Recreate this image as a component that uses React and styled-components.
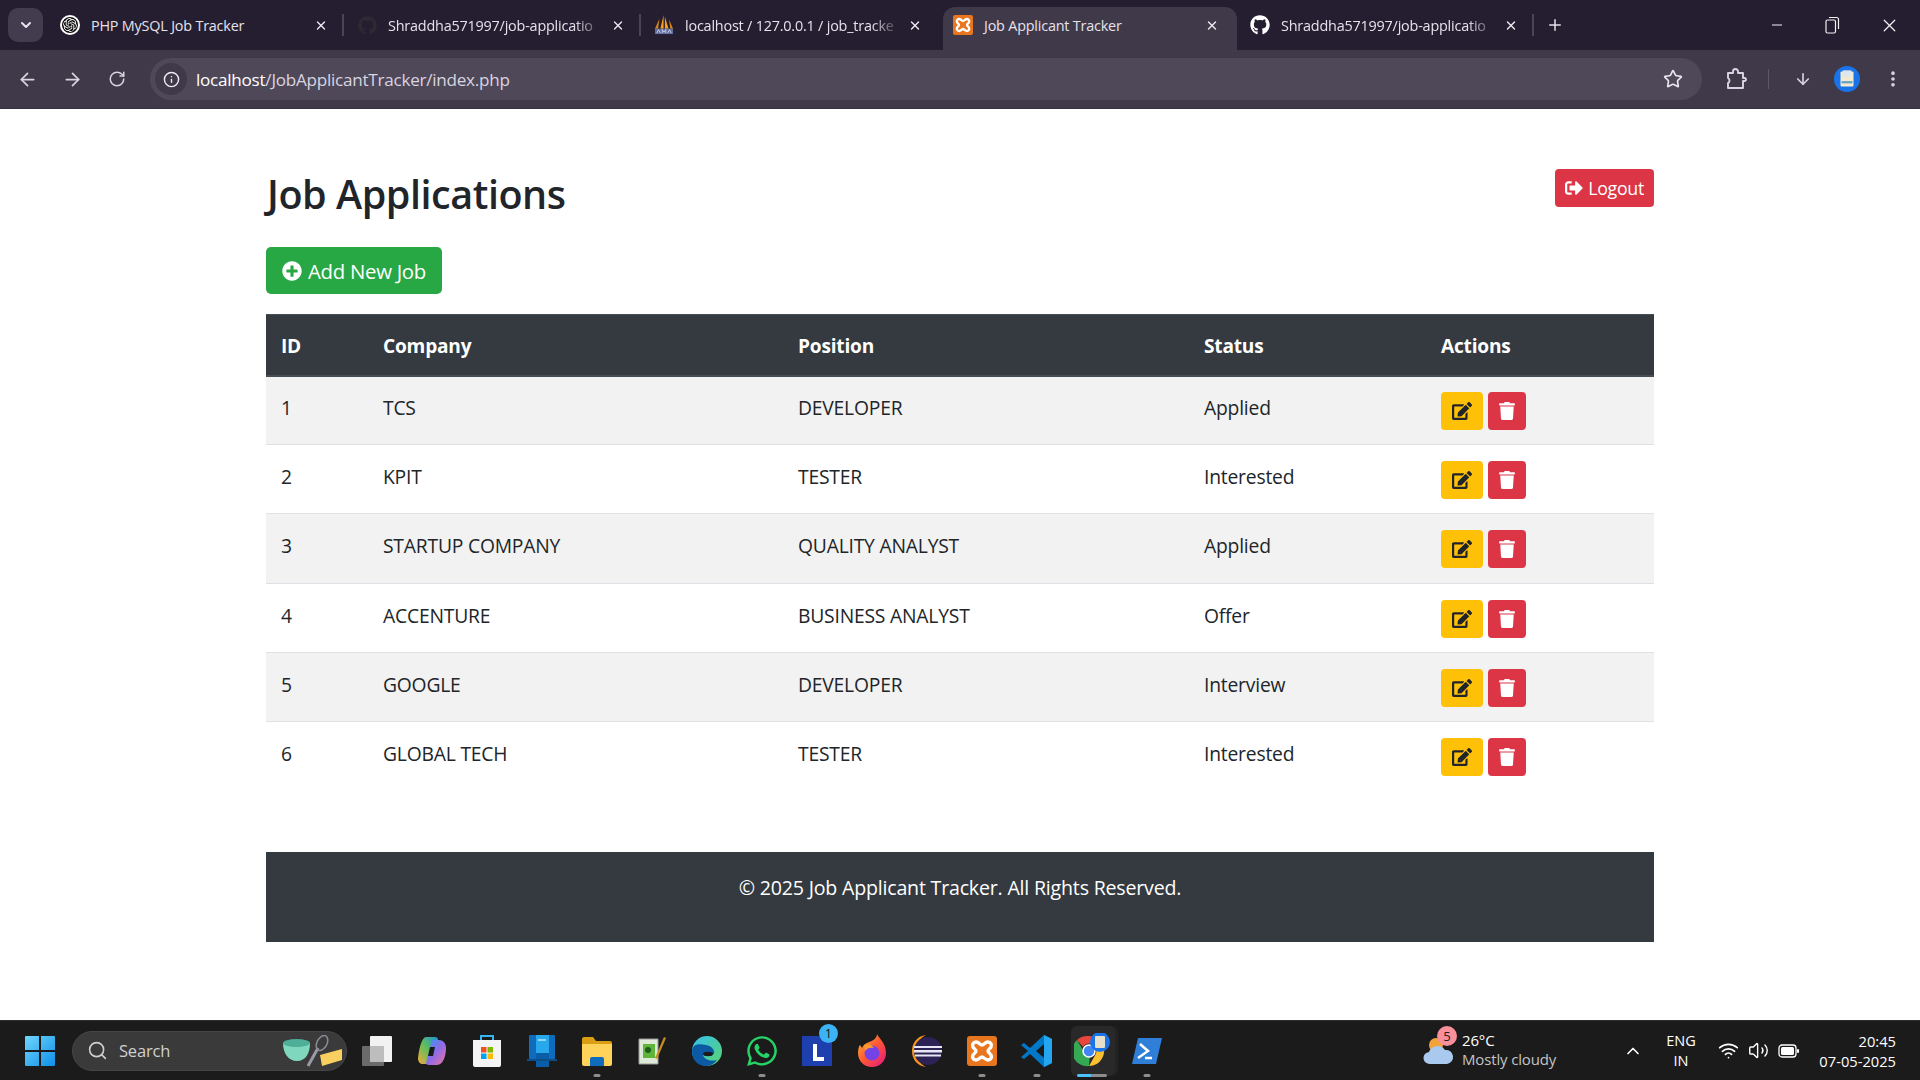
import React from "react";
import styled, { createGlobalStyle } from "styled-components";
import { FaEdit, FaTrash, FaSignOutAlt, FaPlusCircle, FaGithub, FaWhatsapp } from "react-icons/fa";
import { SiOpenai } from "react-icons/si";
import { ArrowLeft, ArrowRight, RotateCw, Info, Star, ArrowDown, EllipsisVertical, Minus, X, Plus, Search as SearchGlyph, ChevronUp, ChevronDown, Wifi, Volume2 } from "lucide-react";

const Global = createGlobalStyle`
  html, body { margin: 0; padding: 0; height: 100%; background: #fff; }
  body { font-family: "Open Sans", "Noto Sans", sans-serif; color: #212529; overflow: hidden; }
  #root { height: 100%; }
  * { box-sizing: border-box; }
`;

const Screen = styled.div`
  width: 1920px; height: 1080px; display: flex; flex-direction: column; background: #fff;
`;
const TabStrip = styled.div`
  height: 50px; background: #251d30; display: flex; align-items: flex-end; padding-left: 8px; flex: none;
`;
const TabSearch = styled.div`
  width: 35px; height: 34px; margin: 0 4px 8px 0; border-radius: 10px; background: #423c4e; color: #e8e4ee;
  display: flex; align-items: center; justify-content: center;
`;
const TabItem = styled.div`
  width: ${p => (p.$active ? "294px" : "297px")};
  margin-left: ${p => (p.$active ? "5px" : "0")};
  height: ${p => (p.$active ? "43px" : "50px")};
  padding-left: ${p => (p.$active ? "10px" : "13px")};
  padding-right: ${p => (p.$active ? "18px" : "16px")};
  padding-bottom: ${p => (p.$active ? "7px" : "0")};
  background: ${p => (p.$active ? "#3f3949" : "transparent")};
  border-radius: 12px 12px 0 0;
  display: flex; align-items: center; gap: 11px; color: #e4e0ea;
  position: relative;
  &::after {
    content: ""; position: absolute; right: 0; top: 14px; width: 2px; height: 22px;
    background: ${p => (p.$sep ? "#4a4455" : "transparent")};
  }
`;
const Favicon = styled.span`
  width: 20px; height: 20px; flex: none; display: flex; align-items: center; justify-content: center;
`;
const TabTitle = styled.span`
  flex: 1; min-width: 0; white-space: nowrap; font-size: 14.4px; letter-spacing: -0.2px; color: #e6e2ec;
  ${p => p.$fade && "-webkit-mask-image: linear-gradient(90deg,#000 88%,rgba(0,0,0,.15) 100%); mask-image: linear-gradient(90deg,#000 88%,rgba(0,0,0,.15) 100%);"}
`;
const TabClose = styled.span`
  width: 14px; height: 14px; flex: none; display: flex; align-items: center; justify-content: center; color: #ece9f0;
`;
const NewTab = styled.div`
  width: 20px; height: 50px; margin-left: 11px; display: flex; align-items: center; justify-content: center; color: #e4e0ea;
`;
const WinControls = styled.div`
  margin-left: auto; height: 50px; display: flex; align-items: center; padding-right: 2px; color: #f2eff5;
`;
const WinBtn = styled.div`
  width: 56.5px; display: flex; align-items: center; justify-content: center;
`;
const Toolbar = styled.div`
  height: 59px; flex: none; background: #3f3949; border-bottom: 1px solid #37323f; display: flex; align-items: center; padding: 0 0 0 9px; color: #d9d4e0;
`;
const NavBtn = styled.div`
  width: 36px; height: 36px; margin-right: ${p => p.$mr || 9}px; display: flex; align-items: center; justify-content: center;
`;
const Omnibox = styled.div`
  width: 1552px; height: 42px; margin-left: 14px; border-radius: 21px; background: #4f4858; display: flex; align-items: center; padding: 0 19px 0 5px;
`;
const InfoChip = styled.div`
  width: 32px; height: 32px; border-radius: 50%; background: #3f3949; display: flex; align-items: center; justify-content: center; color: #efebf3; margin-right: 9px;
`;
const Url = styled.div`
  flex: 1; font-size: 17.1px; letter-spacing: -0.25px; color: #d9d4e0; white-space: nowrap;
  b { font-weight: 400; color: #fff; }
`;
const ToolIcons = styled.div`
  display: flex; align-items: center; flex: 1; padding-left: 16px;
`;
const ToolSep = styled.div`
  width: 1px; height: 20px; background: #5c5666; margin: 0 16px 0 14px;
`;
const ToolIcon = styled.div`
  width: ${p => p.$w || 36}px; height: 36px; display: flex; align-items: center; justify-content: center; margin-right: ${p => p.$mr || 0}px;
`;
const Page = styled.main`
  flex: 1; min-height: 0; background: #fff; display: flex; flex-direction: column; align-items: center;
`;
const Container = styled.div`
  width: 1388px; padding-top: 60px;
`;
const HeaderRow = styled.div`
  display: flex; justify-content: space-between; align-items: flex-start; height: 78px;
`;
const Title = styled.h1`
  margin: 0 0 0 1px; font-size: 39.5px; line-height: 50px; font-weight: 600; letter-spacing: -0.45px; color: #212529;
`;
const Button = styled.a`
  display: inline-flex; align-items: center; gap: ${p => (p.$large ? 6 : 5)}px; color: #fff; background: ${p => p.$bg};
  border-radius: ${p => (p.$large ? "5px" : "4px")};
  height: ${p => (p.$large ? "47px" : "38px")};
  padding: ${p => (p.$large ? "0 16px" : "0 10px")};
  font-size: ${p => (p.$large ? "20.4px" : "17.8px")}; letter-spacing: -0.3px;
`;
const Table = styled.table`
  width: 1388px; margin-top: 20px; border-collapse: collapse; table-layout: fixed; font-size: 19.3px; letter-spacing: -0.2px;
`;
const Th = styled.th`
  background: #343a40; color: #fff; height: 61px; padding: 2px 15px 0; text-align: left; font-weight: 700; font-size: 19.1px;
  border-top: 1px solid #454d55; border-bottom: 2px solid #454d55;
`;
const Tr = styled.tr`
  height: 69.2px; background: ${p => (p.$odd ? "#f2f2f2" : "#fff")};
`;
const Td = styled.td`
  padding: 0 15px 5px; border-top: 1px solid #dee2e6; color: #212529;
`;
const ActionCell = styled.td`
  padding: 2px 15px 0; border-top: 1px solid #dee2e6;
`;
const Actions = styled.div` display: flex; gap: 5px; `;
const IconBtn = styled.button`
  border: 0; padding: 0; height: 38px; width: ${p => p.$w}px; background: ${p => p.$bg}; color: ${p => p.$fg}; border-radius: 4px;
  display: flex; align-items: center; justify-content: center;
`;
const Footer = styled.footer`
  margin-top: 61px; height: 90px; background: #343a40; color: #fff; text-align: center; font-size: 19.6px; letter-spacing: -0.2px; padding-top: 23px; line-height: 26px;
`;
const Taskbar = styled.div`
  height: 60px; flex: none; background: #1b1b1b; border-top: 1px solid #2e2e2e; display: flex; align-items: center; color: #fff;
`;
const StartBtn = styled.div` width: 30px; height: 30px; margin-left: 25px; flex: none; display: flex; `;
const SearchPill = styled.div`
  width: 275px; height: 40px; margin-left: 17px; flex: none; border-radius: 20px; background: #3a3a3a; border: 1px solid #464646; display: flex; align-items: center; padding-left: 14px; color: #d0d0d0; font-size: 16.5px; letter-spacing: -0.2px;
`;
const SearchLabel = styled.span` margin-left: 11px; flex: 1; `;
const Doodle = styled.span` display: flex; margin-right: 2px; `;
const AppRow = styled.div` display: flex; margin-left: 2px; flex: none; `;
const AppSlot = styled.div`
  width: 55px; height: 58px; display: flex; align-items: center; justify-content: center; position: relative;
  ${p => p.$active && `
    &::before { content:""; position:absolute; left:7px; right:4px; top:4px; bottom:4px; background:#292929; border-radius:6px; box-shadow: 3px 0 0 #232323; }
  `}
  &::after {
    content: ""; position: absolute; bottom: 3px; left: 50%; transform: translateX(-50%);
    height: 3px; border-radius: 2px;
    width: ${p => (p.$active ? "30px" : p.$dot ? "7px" : "0")};
    background: ${p => (p.$active ? "linear-gradient(90deg,#4cc2ff 45%,#8d8d8d 45%)" : "#8d8d8d")};
  }
  svg { position: relative; z-index: 1; }
`;
const CountBadge = styled.span`
  position: absolute; top: 2px; right: 6px; width: 19px; height: 19px; border-radius: 50%; background: #3bb3f4; color: #111; font-size: 12px; display: flex; align-items: center; justify-content: center; z-index: 2;
`;
const Tray = styled.div` margin-left: auto; display: flex; align-items: center; height: 100%; `;
const Weather = styled.div` display: flex; align-items: center; position: relative; width: 190px; `;
const WeatherBadge = styled.span`
  position: absolute; left: 14px; top: -5px; width: 20px; height: 20px; border-radius: 50%; background: #f88f9b; color: #222; font-size: 13px; display: flex; align-items: center; justify-content: center;
`;
const WeatherText = styled.div`
  margin-left: 8px; font-size: 15px; line-height: 20px; letter-spacing: -0.15px; transform: translateY(-1px);
  small { display: block; font-size: 15px; line-height: 19px; color: #c4c4c4; }
`;
const Caret = styled.div` width: 40px; display: flex; justify-content: center; `;
const Lang = styled.div` width: 56px; text-align: center; font-size: 14.5px; line-height: 20px; `;
const SysIcons = styled.div` display: flex; align-items: center; gap: 9px; margin-left: 9px; width: 95px; `;
const Clock = styled.div` width: 80px; margin-left: 3px; text-align: right; font-size: 14.7px; line-height: 20px; margin-right: 24px; white-space: nowrap; `;

const ExtIcon = () => (
  <svg width="22" height="24" viewBox="0 0 22 24" fill="none" stroke="currentColor" strokeWidth="1.900" strokeLinejoin="round">
    <path d="M3 6h5V4.500a2.500 2.500 0 0 1 5 0V6h5v5h1.500a1.500 1.500 0 0 1 0 3H18v7H3v-5c2-1 2-4 0-5z" />
  </svg>
);
const RestoreIcon = () => (
  <svg width="16" height="18" viewBox="0 0 16 18" fill="none" stroke="currentColor" strokeWidth="1.200">
    <rect x="1" y="4" width="9.500" height="13" rx="1.500"/><path d="M4 1.500h7.500a2 2 0 0 1 2 2v9.500"/>
  </svg>
);
const PmaIcon = () => (
  <svg width="22" height="22" viewBox="0 0 22 22">
    <path d="M10.500 0 7 15h3.500zM12 2l4 13h-4z" fill="#f7a01e"/>
    <path d="M6 4 1 15h3.500zM16.500 5 21 15h-3z" fill="#d98616"/>
    <rect x="1" y="15" width="20" height="6" fill="#5f6a9c"/>
    <path d="M3 20l2-4 2 4M9 20v-4l2 3 2-3v4M15 20l2-4 2 4" fill="none" stroke="#d8dcf0" strokeWidth=".9"/>
  </svg>
);
const XamppIcon = ({ s = 20 }) => (
  <svg width={s} height={s} viewBox="0 0 30 30">
    <rect width="30" height="30" rx="3" fill="#e8761f"/>
    <path d="M9 6c3 0 4 3 6 3s3-3 6-3c3 0 4 3 3 5-.7 1.400-3 2.500-3 4s2.300 2.600 3 4c1 2 0 5-3 5-3 0-4-3-6-3s-3 3-6 3c-3 0-4-3-3-5 .7-1.400 3-2.500 3-4s-2.300-2.600-3-4C5 9 6 6 9 6z" fill="none" stroke="#fff" strokeWidth="3.400"/>
  </svg>
);
const Avatar = ({ s = 26 }) => (
  <svg width={s} height={s} viewBox="0 0 24 24">
    <circle cx="12" cy="12" r="12" fill="#1a73e8"/>
    <rect x="6" y="5" width="12" height="14" rx="1" fill="#f3ead0"/>
    <rect x="8" y="4" width="8" height="6" fill="#dfe7ee"/>
    <rect x="7" y="14" width="10" height="2" fill="#5aa0c8"/>
  </svg>
);
const WinLogo = () => (
  <svg width="30" height="30" viewBox="0 0 30 30">
    <defs><linearGradient id="wl" x1="0" y1="0" x2="1" y2="1"><stop offset="0" stopColor="#6fd6fb"/><stop offset="1" stopColor="#0f8fe8"/></linearGradient></defs>
    <path d="M0 1a1 1 0 0 1 1-1h13v14H0zM16 0h13a1 1 0 0 1 1 1v13H16zM0 16h14v14H1a1 1 0 0 1-1-1zM16 16h14v13a1 1 0 0 1-1 1H16z" fill="url(#wl)"/>
  </svg>
);
const Bowl = () => (
  <svg width="62" height="32" viewBox="0 0 62 32">
    <path d="M1 8h27c0 10-4 18-13 18S1 18 1 8z" fill="#7fd8bd"/><ellipse cx="14.500" cy="8" rx="13.500" ry="4" fill="#4fae98"/>
    <path d="M26 31 36 13" stroke="#9a9aa6" strokeWidth="3"/><ellipse cx="40" cy="8" rx="5" ry="8" transform="rotate(28 40 8)" fill="none" stroke="#8c8c98" strokeWidth="1.500"/>
    <path d="M38 20 60 14v11l-20 6z" fill="#f9cf5f"/>
  </svg>
);
const TaskView = () => (
  <svg width="30" height="30" viewBox="0 0 30 30"><rect x="8" width="22" height="26" fill="#f2f2f2" rx="1"/><rect y="10" width="22" height="20" rx="1" fill="#6b6b6b"/><rect x="8" y="10" width="14" height="16" fill="#bdbdbd"/></svg>
);
const Copilot = () => (
  <svg width="30" height="30" viewBox="0 0 30 30">
    <defs><linearGradient id="cp" x1="0" y1="0" x2="1" y2="1"><stop offset="0" stopColor="#2d9cf0"/><stop offset=".5" stopColor="#8f6be8"/><stop offset="1" stopColor="#f0739a"/></linearGradient><linearGradient id="cp2" x1="0" y1="1" x2="1" y2="0"><stop offset="0" stopColor="#f2a93b"/><stop offset=".5" stopColor="#5fbf5a"/><stop offset="1" stopColor="#1f8fe0"/></linearGradient></defs>
    <path d="M9 1h9c2 0 3 1 3 3l-5 20c-.500 2-2 4-5 4H6C3 28 1 26 1 22 2 12 5 1 9 1z" fill="url(#cp2)"/>
    <path d="M14 4h8c4 0 7 3 7 8 0 8-3 17-9 17h-8c-2 0-3-1-3-2l6-23z" fill="url(#cp)"/>
    <path d="M13 11h5l-2 9h-5z" fill="#1b1b1b"/>
  </svg>
);
const Store = () => (
  <svg width="30" height="34" viewBox="0 0 30 34">
    <path d="M9 6V2h12v4" fill="none" stroke="#35b6f2" strokeWidth="2"/>
    <path d="M1 6h28v25a2 2 0 0 1-2 2H3a2 2 0 0 1-2-2z" fill="#f4f4f4"/>
    <rect x="9" y="13" width="5.500" height="5.500" fill="#f25022"/><rect x="15.500" y="13" width="5.500" height="5.500" fill="#7fba00"/><rect x="9" y="19.500" width="5.500" height="5.500" fill="#00a4ef"/><rect x="15.500" y="19.500" width="5.500" height="5.500" fill="#ffb900"/>
  </svg>
);
const BlueApp = () => (
  <svg width="30" height="32" viewBox="0 0 30 32">
    <rect x="2" width="26" height="24" rx="1" fill="#0f6cbd"/><rect x="9" width="13" height="32" fill="#28a8ea"/><rect x="9" y="18" width="13" height="14" fill="#0a5ea8"/><rect y="24" width="30" height="2" fill="#0b4f8a"/><rect x="11" y="4" width="8" height="2" fill="#8fd8f8"/>
  </svg>
);
const Explorer = () => (
  <svg width="30" height="30" viewBox="0 0 30 30">
    <path d="M0 3a2 2 0 0 1 2-2h9l3 4h14a2 2 0 0 1 2 2v3H0z" fill="#d99e12"/><path d="M0 8h30v20a2 2 0 0 1-2 2H2a2 2 0 0 1-2-2z" fill="#ffd25a"/><path d="M8 23a2 2 0 0 1 2-2h10a2 2 0 0 1 2 2v7H8z" fill="#0f6cbd"/>
  </svg>
);
const NotepadPP = () => (
  <svg width="28" height="30" viewBox="0 0 28 30">
    <path d="M1 3h19v25H1z" fill="#dfe9d8" stroke="#999"/><path d="M5 8h12v14H5z" fill="#5eb53a"/><circle cx="10" cy="14" r="3" fill="#1e5c1e"/><path d="M17 22 26 1l2 1-9 21z" fill="#c88d1c"/>
  </svg>
);
const Edge = () => (
  <svg width="30" height="30" viewBox="0 0 30 30">
    <defs><linearGradient id="eg" x1="0" y1="0" x2="1" y2="1"><stop offset="0" stopColor="#35c1f1"/><stop offset="1" stopColor="#5ad46c"/></linearGradient></defs>
    <circle cx="15" cy="15" r="15" fill="url(#eg)"/>
    <path d="M0 15C1 7 8 8 14 9c6 1 9 5 8 9H11c0 4 5 8 14 6-3 4-7 6-11 6C6 30 0 24 0 15z" fill="#0c59a4"/>
    <ellipse cx="16" cy="18" rx="5" ry="2.200" fill="#1b1b1b"/>
  </svg>
);
const LApp = () => (
  <svg width="30" height="30" viewBox="0 0 30 30"><rect width="30" height="30" fill="#1e3fae"/><path d="M11 8h4v13h7v4H11z" fill="#fff"/></svg>
);
const Firefox = () => (
  <svg width="30" height="34" viewBox="0 0 30 34">
    <defs><linearGradient id="ff" x1="0" y1="0" x2="1" y2="1"><stop offset="0" stopColor="#ffbd2e"/><stop offset=".5" stopColor="#ff5634"/><stop offset="1" stopColor="#e31587"/></linearGradient></defs>
    <path d="M20 0c1 4 9 8 9 19 0 8-6 14-14 14S1 27 1 19c0-4 1-7 2-8l2 3c1-3 4-5 7-6 4-1 8-4 8-8z" fill="url(#ff)"/>
    <circle cx="15" cy="19" r="7.500" fill="#7542e5"/><path d="M7 11c4-2 8 0 10 3-3-1-7 0-9 3z" fill="#ff9a2e"/>
  </svg>
);
const Eclipse = () => (
  <svg width="30" height="32" viewBox="0 0 30 32">
    <path d="M14 0C5 1 0 8 0 16s5 15 14 16C8 29 4 23 4 16S8 3 14 0z" fill="#f7941e"/>
    <circle cx="16" cy="16" r="14" fill="#2c2255"/><rect x="2" y="11" width="28" height="2" fill="#e8e6f2"/><rect x="2" y="15" width="28" height="2.500" fill="#e8e6f2"/><rect x="3" y="19.500" width="26" height="2" fill="#e8e6f2"/>
  </svg>
);
const VSCode = () => (
  <svg width="31" height="32" viewBox="0 0 31 32">
    <path d="M23 0 31 4v24l-8 4-14-13-6 5-3-2 7-6-7-6 3-2 6 5z" fill="#0078c8"/><path d="M23 0 31 4v24l-8 4V22l-7-6 7-7z" fill="#22a7f0"/><path d="M23 9v14l-8-7z" fill="#1b1b1b"/>
  </svg>
);
const Chrome = () => (
  <svg width="36" height="36" viewBox="0 0 36 36">
    <path d="M15 3a15 15 0 0 1 13 7.500H15a7 7 0 0 0-6 3.500L3 7a15 15 0 0 1 12-4z" fill="#e8453c"/>
    <path d="M28 10.500A15 15 0 0 1 15 33l6.500-11.500A7 7 0 0 0 21 14z" fill="#fbc02d"/>
    <path d="M15 33A15 15 0 0 1 3 7l6 10a7 7 0 0 0 7 5z" fill="#34a853"/>
    <circle cx="15" cy="18" r="6" fill="#4285f4" stroke="#fff" strokeWidth="1.500"/>
    <g transform="translate(16 0)"><circle cx="10" cy="9" r="10" fill="#1a73e8"/><rect x="5" y="3" width="10" height="12" rx="1" fill="#e6dfca"/></g>
  </svg>
);
const PowerShell = () => (
  <svg width="30" height="26" viewBox="0 0 30 26">
    <path d="M6 0h24l-6 26H0z" fill="#2f7fd8"/><path d="M8 6l8 7-10 7" fill="none" stroke="#fff" strokeWidth="2.500"/><path d="M13 20h7" stroke="#fff" strokeWidth="2.500"/>
  </svg>
);
const Cloud = () => (
  <svg width="31" height="30" viewBox="0 0 31 30">
    <circle cx="13" cy="9" r="7" fill="#f2a33a"/>
    <path d="M7 28a6 6 0 0 1-1-12 9 9 0 0 1 16-2 7 7 0 0 1 2 14z" fill="#a9c9ee"/>
  </svg>
);
const Battery = () => (
  <svg width="21" height="14" viewBox="0 0 21 14"><rect x="1" y="1" width="17" height="12" rx="3" fill="none" stroke="#fff" strokeWidth="1.300"/><rect x="3" y="3" width="13" height="8" rx="1.500" fill="#fff"/><rect x="19" y="5" width="2" height="4" rx="1" fill="#fff"/></svg>
);

const tabs = [
  { title: "PHP MySQL Job Tracker", icon: <SiOpenai size={18} color="#fff" style={{ background: "#0d0d0d", borderRadius: "50%", outline: "2px solid #fff", outlineOffset: -1, padding: 2 }} />, sep: true },
  { title: "Shraddha571997/job-applicatio", icon: <FaGithub size={19} color="#2d2a33" />, sep: true, fade: true },
  { title: "localhost / 127.0.0.1 / job_tracke", icon: <PmaIcon />, fade: true },
  { title: "Job Applicant Tracker", icon: <XamppIcon />, active: true },
  { title: "Shraddha571997/job-applicatio", icon: <FaGithub size={20} color="#fff" />, sep: true, fade: true },
];
const jobs = [
  [1, "TCS", "DEVELOPER", "Applied"],
  [2, "KPIT", "TESTER", "Interested"],
  [3, "STARTUP COMPANY", "QUALITY ANALYST", "Applied"],
  [4, "ACCENTURE", "BUSINESS ANALYST", "Offer"],
  [5, "GOOGLE", "DEVELOPER", "Interview"],
  [6, "GLOBAL TECH", "TESTER", "Interested"],
];
const apps = [
  { el: <TaskView /> }, { el: <Copilot /> }, { el: <Store /> }, { el: <BlueApp /> },
  { el: <Explorer />, dot: true }, { el: <NotepadPP /> }, { el: <Edge /> },
  { el: <FaWhatsapp size={34} color="#25d366" />, dot: true },
  { el: <LApp />, badge: "1" }, { el: <Firefox /> }, { el: <Eclipse /> },
  { el: <XamppIcon s={30} />, dot: true }, { el: <VSCode />, dot: true },
  { el: <Chrome />, active: true }, { el: <PowerShell />, dot: true },
];

export default function App() {
  return (
    <Screen>
      <Global />
      <TabStrip>
        <TabSearch><ChevronDown size={16} strokeWidth={3} /></TabSearch>
        {tabs.map((t, i) => (
          <TabItem key={i} $active={t.active} $sep={t.sep}>
            <Favicon>{t.icon}</Favicon>
            <TabTitle $fade={t.fade}>{t.title}</TabTitle>
            <TabClose><X size={15} strokeWidth={2.4} /></TabClose>
          </TabItem>
        ))}
        <NewTab><Plus size={18} strokeWidth={2} /></NewTab>
        <WinControls>
          <WinBtn><Minus size={16} strokeWidth={1.5} /></WinBtn>
          <WinBtn><RestoreIcon /></WinBtn>
          <WinBtn><X size={21} strokeWidth={1.4} /></WinBtn>
        </WinControls>
      </TabStrip>
      <Toolbar>
        <NavBtn><ArrowLeft size={21} strokeWidth={2} /></NavBtn>
        <NavBtn><ArrowRight size={21} strokeWidth={2} /></NavBtn>
        <NavBtn $mr={1}><RotateCw size={18} strokeWidth={2} /></NavBtn>
        <Omnibox>
          <InfoChip><Info size={17} strokeWidth={2} /></InfoChip>
          <Url><b>localhost</b>/JobApplicantTracker/index.php</Url>
          <Star size={20} strokeWidth={2} color="#e8e4ee" />
        </Omnibox>
        <ToolIcons>
          <ToolIcon><ExtIcon /></ToolIcon>
          <ToolSep />
          <ToolIcon><ArrowDown size={18} strokeWidth={2.2} /></ToolIcon>
          <ToolIcon $w={52} $mr={4}><Avatar /></ToolIcon>
          <ToolIcon $w={32}><EllipsisVertical size={20} strokeWidth={2.4} /></ToolIcon>
        </ToolIcons>
      </Toolbar>
      <Page>
        <Container>
          <HeaderRow>
            <Title>Job Applications</Title>
            <Button $bg="#dc3545"><FaSignOutAlt size={18} />Logout</Button>
          </HeaderRow>
          <Button $large $bg="#28a745"><FaPlusCircle size={20} />Add New Job</Button>
          <Table>
            <colgroup>
              <col style={{ width: 102 }} /><col style={{ width: 415 }} /><col style={{ width: 406 }} /><col style={{ width: 237 }} /><col />
            </colgroup>
            <thead>
              <tr>{["ID", "Company", "Position", "Status", "Actions"].map(h => <Th key={h}>{h}</Th>)}</tr>
            </thead>
            <tbody>
              {jobs.map((j, i) => (
                <Tr key={j[0]} $odd={i % 2 === 0}>
                  {j.map((c, k) => <Td key={k}>{c}</Td>)}
                  <ActionCell>
                    <Actions>
                      <IconBtn $w={42} $bg="#ffc107" $fg="#212529"><FaEdit size={20} /></IconBtn>
                      <IconBtn $w={38} $bg="#dc3545" $fg="#fff"><FaTrash size={18} /></IconBtn>
                    </Actions>
                  </ActionCell>
                </Tr>
              ))}
            </tbody>
          </Table>
          <Footer>© 2025 Job Applicant Tracker. All Rights Reserved.</Footer>
        </Container>
      </Page>
      <Taskbar>
        <StartBtn><WinLogo /></StartBtn>
        <SearchPill>
          <SearchGlyph size={21} strokeWidth={1.8} />
          <SearchLabel>Search</SearchLabel>
          <Doodle><Bowl /></Doodle>
        </SearchPill>
        <AppRow>
          {apps.map((a, i) => (
            <AppSlot key={i} $dot={a.dot} $active={a.active}>
              {a.el}
              {a.badge && <CountBadge>{a.badge}</CountBadge>}
            </AppSlot>
          ))}
        </AppRow>
        <Tray>
          <Weather>
            <Cloud />
            <WeatherBadge>5</WeatherBadge>
            <WeatherText>26°C<small>Mostly cloudy</small></WeatherText>
          </Weather>
          <Caret><ChevronUp size={20} strokeWidth={2} /></Caret>
          <Lang>ENG<br />IN</Lang>
          <SysIcons>
            <Wifi size={21} strokeWidth={2} />
            <Volume2 size={21} strokeWidth={1.6} />
            <Battery />
          </SysIcons>
          <Clock>20:45<br />07-05-2025</Clock>
        </Tray>
      </Taskbar>
    </Screen>
  );
}
